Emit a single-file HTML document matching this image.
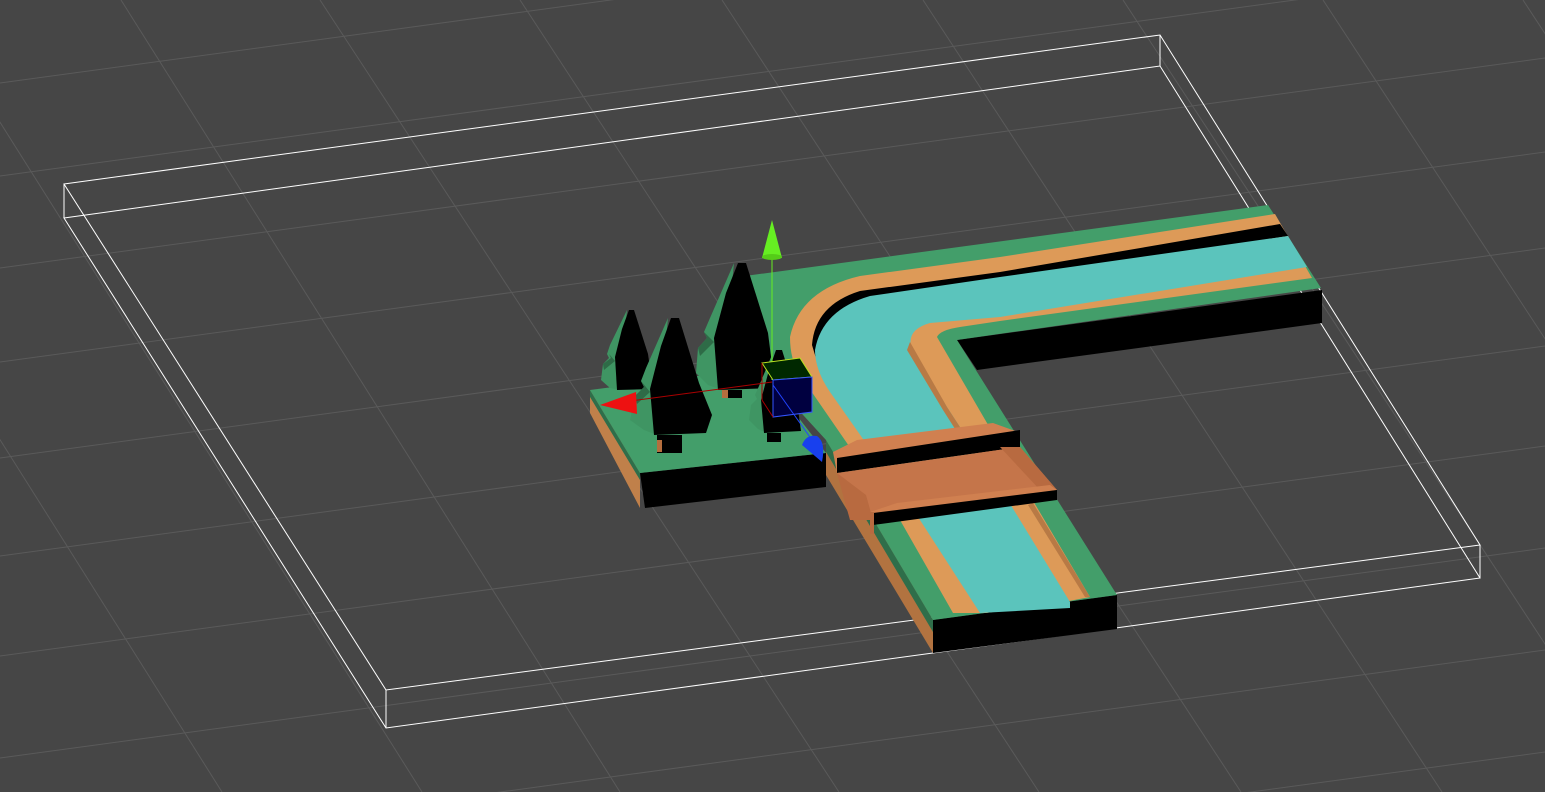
<!DOCTYPE html>
<html><head><meta charset="utf-8"><style>
html,body{margin:0;padding:0;background:#464646;overflow:hidden;width:1545px;height:792px}
svg{display:block;overflow:hidden}
</style></head><body>
<svg width="1545" height="792" viewBox="0 0 1545 792" xmlns="http://www.w3.org/2000/svg" overflow="hidden">
<rect width="1545" height="792" fill="#464646"/>
<g stroke="#5a5a5a" stroke-width="1" fill="none">
<line x1="0" y1="83" x2="1545" y2="-127"/>
<line x1="0" y1="176" x2="1545" y2="-34"/>
<line x1="0" y1="268" x2="1545" y2="58"/>
<line x1="0" y1="362" x2="1545" y2="152"/>
<line x1="0" y1="458" x2="1545" y2="248"/>
<line x1="0" y1="556" x2="1545" y2="346"/>
<line x1="0" y1="656" x2="1545" y2="446"/>
<line x1="0" y1="758" x2="1545" y2="548"/>
<line x1="0" y1="860" x2="1545" y2="650"/>
<line x1="0" y1="962" x2="1545" y2="752"/>
<line x1="-77" y1="0" x2="422" y2="792"/>
<line x1="121" y1="0" x2="620" y2="792"/>
<line x1="320" y1="0" x2="839" y2="792"/>
<line x1="520" y1="0" x2="1039" y2="792"/>
<line x1="722" y1="0" x2="1241" y2="792"/>
<line x1="923" y1="0" x2="1442" y2="792"/>
<line x1="1123" y1="0" x2="1642" y2="792"/>
<line x1="1323" y1="0" x2="1842" y2="792"/>
<line x1="1523" y1="0" x2="2042" y2="792"/>
<line x1="-277" y1="0" x2="222" y2="792"/>
</g>
<g stroke="#ffffff" stroke-width="1" fill="none">
<polygon points="64,184 1160,35 1480,545 386,690"/>
<polygon points="64,218 1160,66 1480,578 386,728"/>
<line x1="64" y1="184" x2="64" y2="218"/>
<line x1="1160" y1="35" x2="1160" y2="66"/>
<line x1="1480" y1="545" x2="1480" y2="578"/>
<line x1="386" y1="690" x2="386" y2="728"/>
</g>
<polygon points="590,390 640,473 640,508 590,413" fill="#c0804a"/>
<polygon points="590,390 640,473 640,480 590,397" fill="#2f6e4a"/>
<polygon points="640,473 826,453 826,487 645,508" fill="#000"/>
<polygon points="590,390 760,368 826,453 640,473" fill="#439e6a"/>
<polygon points="826,440 933,620 933,653 826,475" fill="#b27340"/>
<polygon points="826,440 933,620 933,632 826,452" fill="#2f6e4a"/>
<polygon points="933,620 1117,595 1117,629 933,653" fill="#000"/>
<polygon points="957,340 1322,290 1322,323 977,370" fill="#000"/>
<path d="M1268,205 L1321,288 L957,340 L1117,595 L933,620 L826,440 L760,368 L745,276 Z" fill="#439e6a"/>
<path d="M1275,214 L1000,257 L860,276 Q800,290 790,337 Q790,360 800,375 L900,520 L953,613 L986,613 L1069,601 L1090,597 L987,423 L937,337 Q940,330 960,327 L1000,321 L1312,278 Z" fill="#dd9a58"/>
<path d="M1280,224 L1000,272 L860,291 Q815,305 812,345 L818,365 L825,365 L822,345 Q825,312 870,300 L1288,236 Z" fill="#000"/>
<path d="M1288,236 L1000,277 L870,296 Q822,310 815,350 Q815,370 830,392 L920,520 L980,613 L1070,608 L1070,602 L1012,507 L947,407 L912,350 Q905,330 930,323 L1000,317 L1307,267 Z" fill="#5bc4bc"/>
<path d="M910,342 L947,407 L960,427 L957,432 L943,410 L907,350 Z" fill="#b87a45"/>
<path d="M1033,503 L1090,597 L1085,597 L1028,505 Z" fill="#b87a45"/>
<polygon points="833,452 857,440 993,423 1018,432 1020,447 837,473" fill="#d08050"/>
<polygon points="837,458 1020,430 1020,447 837,473" fill="#000"/>
<polygon points="837,473 1020,447 1057,490 873,520" fill="#c5754a"/>
<polygon points="837,473 866,495 873,520 850,520 843,495" fill="#b86a40"/>
<polygon points="1000,447 1020,447 1057,490 1040,490" fill="#b86a40"/>
<polygon points="870,512 897,503 1050,485 1057,490 873,514" fill="#d08050"/>
<polygon points="873,513 1057,490 1057,500 873,525" fill="#000"/>
<rect x="870" y="512" width="4" height="22" fill="#b86a40"/>
<g>
<polygon points="627,310 610,345 607,354 609,358 603,364 601,380 610,388 620,390" fill="#3f9563"/>
<polygon points="609,354 611,358 603,364 604,370 615,361" fill="#2e6b47"/>
<polygon points="629,310 634,310 648,354 653,389 617,390 615,357 622,329" fill="#000"/>
<polygon points="734,263 710,318 704,332 707,338 698,348 696,373 708,385 722,390" fill="#3f9563"/>
<polygon points="704,332 707,338 698,348 700,356 714,342" fill="#2e6b47"/>
<polygon points="738,263 746,263 768,333 775,388 718,390 714,338 726,293" fill="#000"/>
<rect x="722" y="390" width="20" height="8" fill="#b56e3e"/>
<rect x="728" y="390" width="14" height="8" fill="#000"/>
<polygon points="668,318 646,368 641,381 644,387 635,396 630,420 644,430 657,435" fill="#3f9563"/>
<polygon points="641,381 644,387 635,396 637,404 650,392" fill="#2e6b47"/>
<polygon points="671,318 679,318 699,383 712,415 706,433 654,435 650,389 661,346" fill="#000"/>
<rect x="657" y="435" width="25" height="18" fill="#000"/>
<rect x="657" y="440" width="5" height="12" fill="#b56e3e"/>
<polygon points="774,350 759,386 755,395 757,399 751,405 749,420 758,429 767,433" fill="#3f9563"/>
<polygon points="776,350 782,350 796,395 801,431 764,433 761,400 769,370" fill="#000"/>
<rect x="767" y="433" width="14" height="9" fill="#000"/>
</g>
<line x1="772" y1="258" x2="772" y2="380" stroke="#66ee22" stroke-width="1"/>
<polygon points="772,220 762,258 782,258" fill="#66ee22"/>
<ellipse cx="772" cy="257" rx="10" ry="3" fill="#55cc18"/>
<line x1="630" y1="401" x2="772" y2="382" stroke="#aa0000" stroke-width="1"/>
<polygon points="600,405 636,392 637,414" fill="#ee1111"/>
<polygon points="762,363 800,358 812,377 773,380" fill="#002800" stroke="#b8e020" stroke-width="1"/>
<polygon points="773,380 812,377 812,412 773,417" fill="#000040" stroke="#3355ff" stroke-width="1"/>
<line x1="762" y1="363" x2="762" y2="400" stroke="#aa0000"/>
<line x1="762" y1="400" x2="773" y2="417" stroke="#aa0000"/>
<line x1="773" y1="385" x2="812" y2="440" stroke="#2244ff" stroke-width="1"/>
<path d="M802,445 Q806,434 817,436 Q826,442 822,462 Z" fill="#1840ee"/>
</svg>
</body></html>
